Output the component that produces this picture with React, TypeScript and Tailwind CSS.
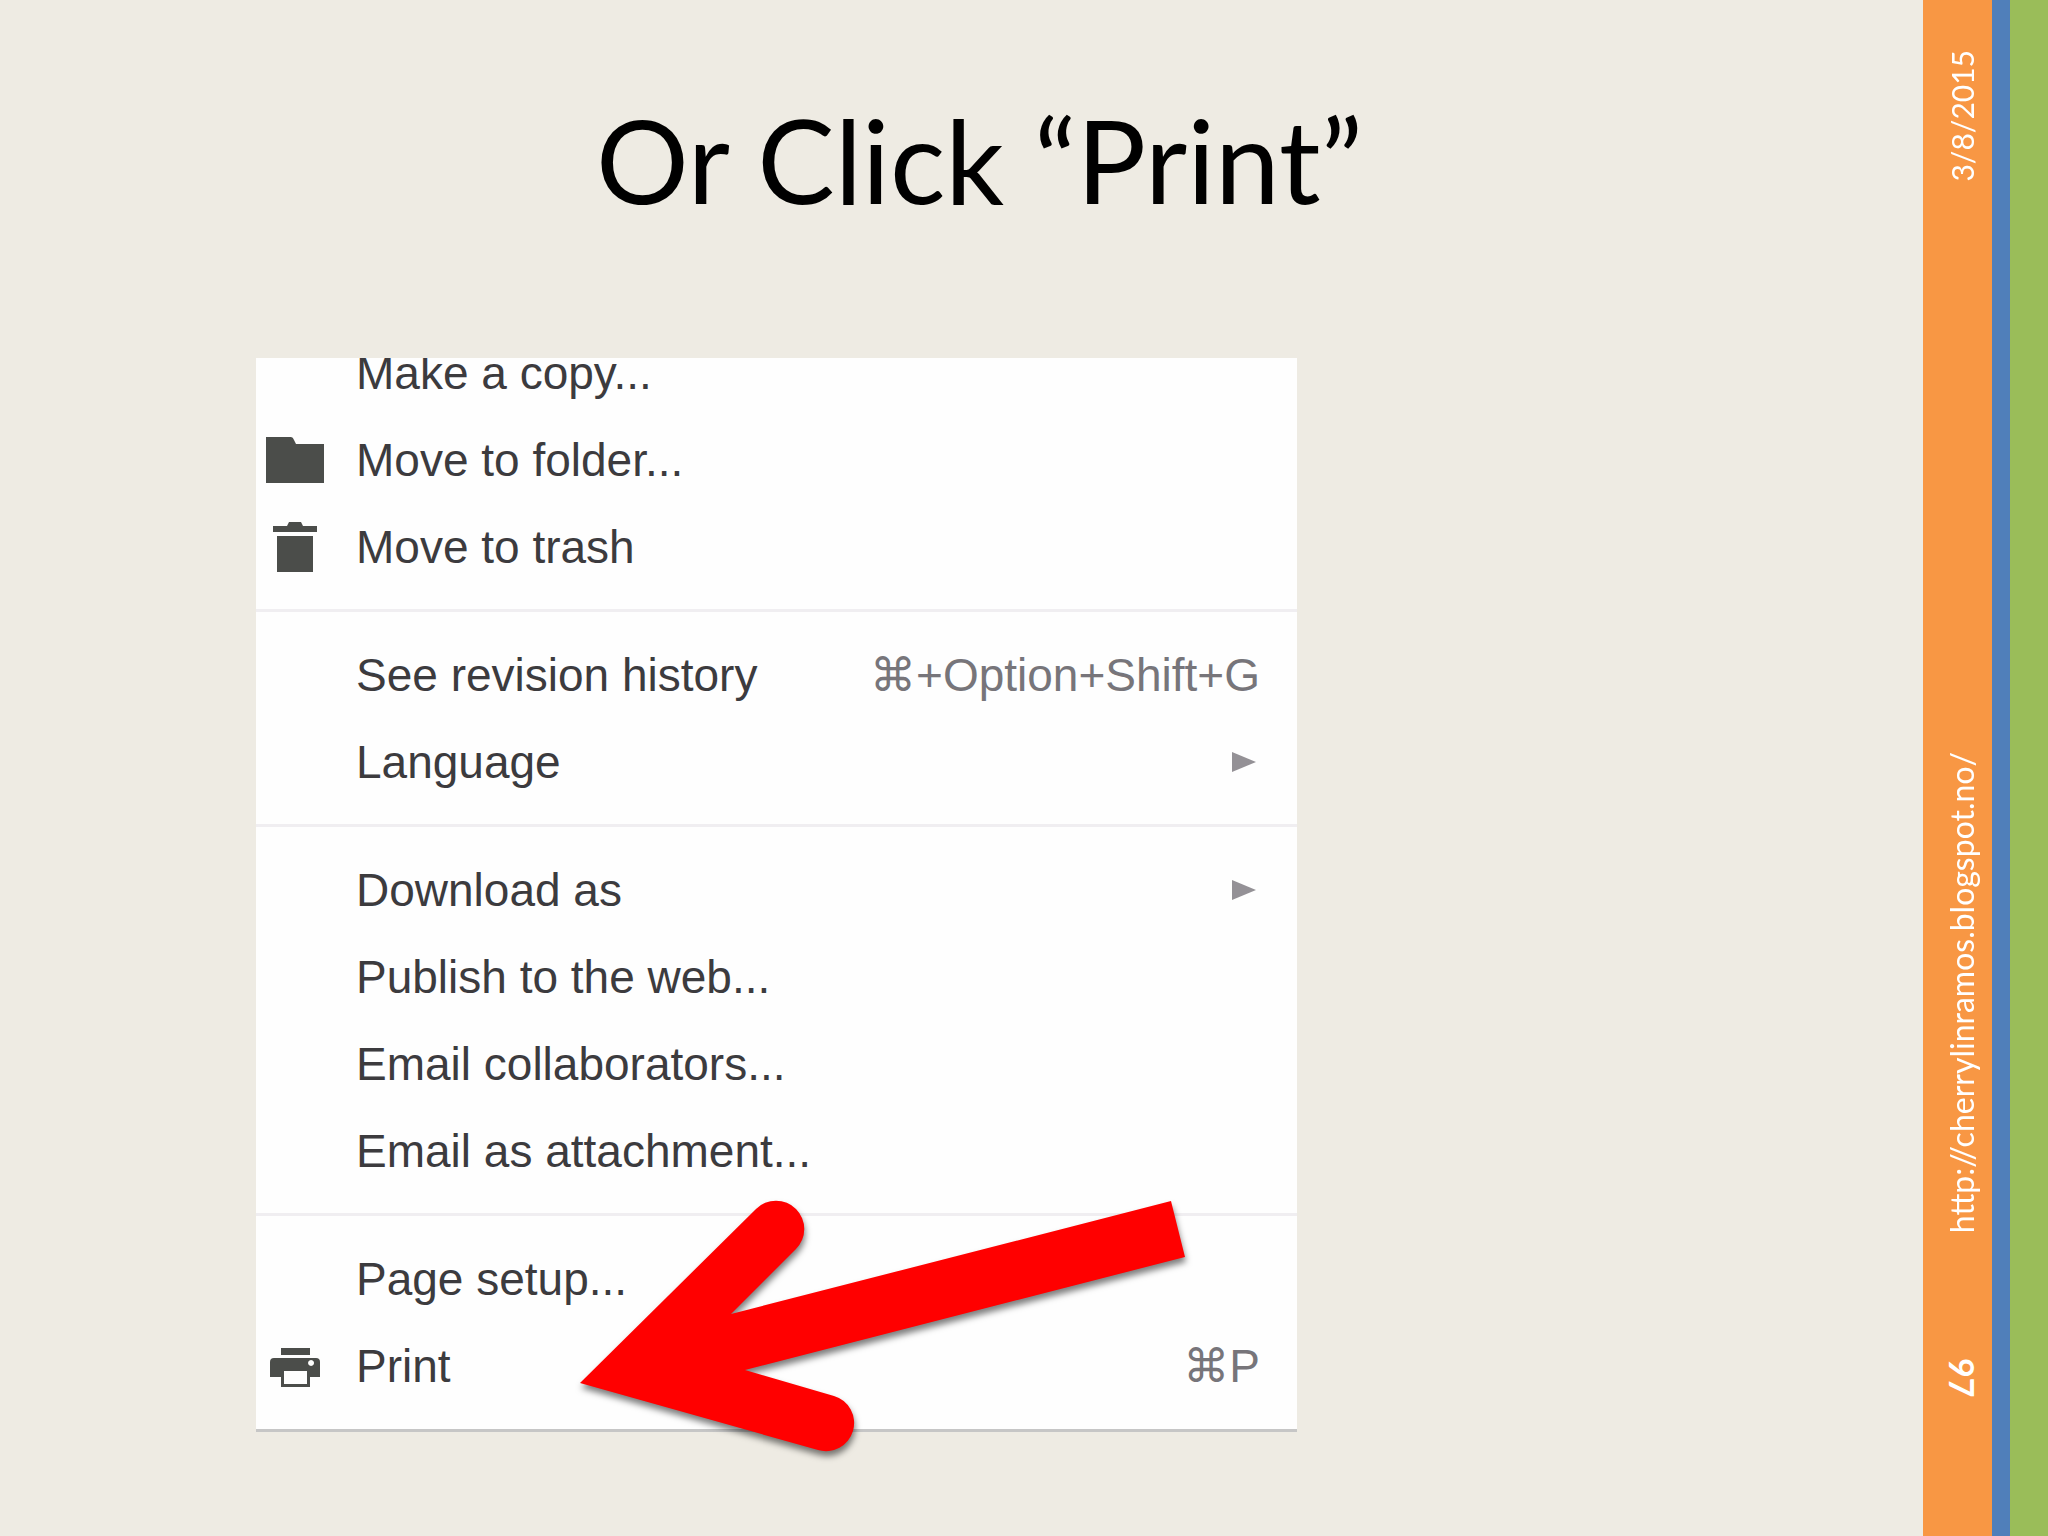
import type { ReactNode } from 'react';
import { clsx } from 'clsx';

interface MenuItem {
  label: string;
  icon?: ReactNode;
  shortcut?: string;
  submenu?: boolean;
}

function FolderIcon() {
  return (
    <svg viewBox="0 0 58 46" className="h-[46px] w-[58px]" fill="currentColor" aria-hidden="true">
      <path d="M0 0h25q2 0 3 3l2 4h28v39H0z" />
    </svg>
  );
}

function TrashIcon() {
  return (
    <svg viewBox="0 0 44 50" className="h-[50px] w-[44px]" fill="currentColor" aria-hidden="true">
      <path d="M0 4h14l2-4h12l2 4h14v6H0zM4 14h36v36H4z" />
    </svg>
  );
}

function PrinterIcon() {
  return (
    <svg viewBox="0 -4 50 44" className="h-11 w-[50px]" fill="currentColor" aria-hidden="true">
      <path d="M11 0h29v7H11z" />
      <path
        fillRule="evenodd"
        d="M4 10h42q4 0 4 4v15H40v10H11V29H0V14q0-4 4-4zM14 23v13h23V23zM41 12a3 3 0 1 0 .1 0z"
      />
    </svg>
  );
}

const GROUPS: MenuItem[][] = [
  [
    { label: 'Make a copy...' },
    { label: 'Move to folder...', icon: <FolderIcon /> },
    { label: 'Move to trash', icon: <TrashIcon /> },
  ],
  [
    { label: 'See revision history', shortcut: '+Option+Shift+G' },
    { label: 'Language', submenu: true },
  ],
  [
    { label: 'Download as', submenu: true },
    { label: 'Publish to the web...' },
    { label: 'Email collaborators...' },
    { label: 'Email as attachment...' },
  ],
  [{ label: 'Page setup...' }, { label: 'Print', icon: <PrinterIcon />, shortcut: 'P' }],
];

function MenuRow({ label, icon, shortcut, submenu }: MenuItem) {
  return (
    <button type="button" className="flex h-[87px] w-full items-center pr-[37px] text-left">
      <span className="flex w-[100px] shrink-0 justify-center pr-[22px] text-[#4b4d4a]">{icon}</span>
      <span className="flex-1 whitespace-nowrap">{label}</span>
      {shortcut && (
        <span className="flex items-center whitespace-nowrap text-[#77757a]">
          <span className="font-['DejaVu_Sans',sans-serif]">⌘</span>
          {shortcut}
        </span>
      )}
      {submenu && (
        <svg viewBox="0 0 24 20" className="mr-1 h-5 w-6 fill-[#949196]" aria-hidden="true">
          <path d="M0 0l24 10L0 20z" />
        </svg>
      )}
    </button>
  );
}

function FileMenu() {
  return (
    <div className="overflow-hidden border-b-[3px] border-[#c6c6c6] bg-[#fefefe] pb-5 font-['Liberation_Sans',Arial,sans-serif] text-[46px] leading-none text-[#3c3b3e]">
      {GROUPS.map((items, i) => (
        <div
          key={items[0].label}
          className={clsx(i === 0 ? '-mt-[29px]' : 'mt-[19px] border-t-[3px] border-[#f0eef1] pt-[19px]')}
        >
          {items.map((item) => (
            <MenuRow key={item.label} {...item} />
          ))}
        </div>
      ))}
    </div>
  );
}

function Arrow() {
  return (
    <svg
      viewBox="570 1190 630 280"
      className="pointer-events-none absolute left-[314px] top-[832px] h-[280px] w-[630px] drop-shadow-[1px_5px_3px_rgba(0,0,0,0.5)]"
      aria-hidden="true"
    >
      <path
        fill="#ff0000"
        d="M580 1383L756 1209A28 28 0 0 1 796 1249L731 1314L1171 1201L1185 1257L745 1370L834 1396A28 28 0 0 1 818 1450Z"
      />
    </svg>
  );
}

function Sidebar() {
  return (
    <aside className="flex shrink-0 font-[Lato,sans-serif] leading-none text-white">
      <div className="flex w-[69px] flex-col items-center bg-[#f89744] pl-2">
        <time className="mt-[50px] rotate-180 text-[30px] leading-none [writing-mode:vertical-rl]">3/8/2015</time>
        <a
          href="http://cherrylinramos.blogspot.no/"
          className="mt-[570px] rotate-180 text-[32px] leading-none whitespace-nowrap [writing-mode:vertical-rl]"
        >
          http://cherrylinramos.blogspot.no/
        </a>
        <span className="mt-[125px] text-[34px] leading-none font-bold [writing-mode:vertical-rl]">97</span>
      </div>
      <div className="w-[18px] bg-[#507fba]" />
      <div className="w-[38px] bg-[#9abd59]" />
    </aside>
  );
}

export default function App() {
  return (
    <div className="flex min-h-screen bg-[#eeebe3]">
      <main className="min-w-0 flex-1">
        <h1 className="flex h-[358px] items-start justify-center pt-24 pl-9 font-[Lato,sans-serif] text-[116px] leading-[128px] text-black">
          Or Click “Print”
        </h1>
        <div className="relative ml-64 max-w-[1041px]">
          <FileMenu />
          <Arrow />
        </div>
      </main>
      <Sidebar />
    </div>
  );
}
